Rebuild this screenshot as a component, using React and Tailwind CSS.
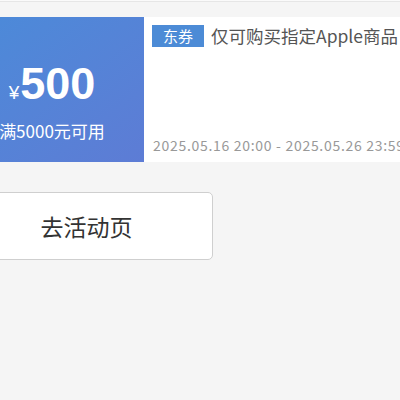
export default function App() {
  return (
    <div
      className="h-[400px] w-[400px] overflow-hidden bg-[#f5f5f5]"
      style={{ fontFamily: '"Noto Sans CJK SC", "Noto Sans", sans-serif' }}
    >
      <div className="h-px bg-[#fafafa]" />
      <div className="h-px bg-[#e6e6e6]" />

      <div className="ml-[-40px] w-[480px] pt-[15px]">
        {/* Coupon */}
        <div className="flex h-[145px]">
          <div className="flex w-[184px] shrink-0 flex-col items-center bg-gradient-to-br from-[#4a8bd9] to-[#5d7cd5] text-white">
            <div className="mt-[41px] flex items-baseline">
              <span className="mr-[1px] text-[19px] font-['Liberation_Sans']">¥</span>
              <span className="text-[45px] font-bold leading-[52px] font-['Liberation_Sans']">500</span>
            </div>
            <div className="mt-[9px] whitespace-nowrap text-[17px] leading-[24px]">满5000元可用</div>
          </div>

          <div className="flex flex-1 flex-col justify-between bg-white pb-[6px] pl-[8px] pt-[7px]">
            <div className="flex items-center">
              <span className="flex h-[22px] w-[52px] items-center justify-center bg-[#4c8bd6] text-[15px] text-white">
                东券
              </span>
              <span className="ml-[7px] whitespace-nowrap text-[17.5px] leading-[24px] text-[#555]">
                仅可购买指定Apple商品
              </span>
            </div>
            <div className="whitespace-nowrap pl-[1px] text-[14px] leading-[22px] tracking-[0.7px] text-[#999]">
              2025.05.16 20:00 - 2025.05.26 23:59
            </div>
          </div>
        </div>

        {/* Button */}
        <button className="mt-[30px] flex h-[68px] w-[253px] items-center justify-center rounded-[5px] border border-[#cfcfcf] bg-white text-[23px] text-[#333]">
          去活动页
        </button>
      </div>
    </div>
  );
}
